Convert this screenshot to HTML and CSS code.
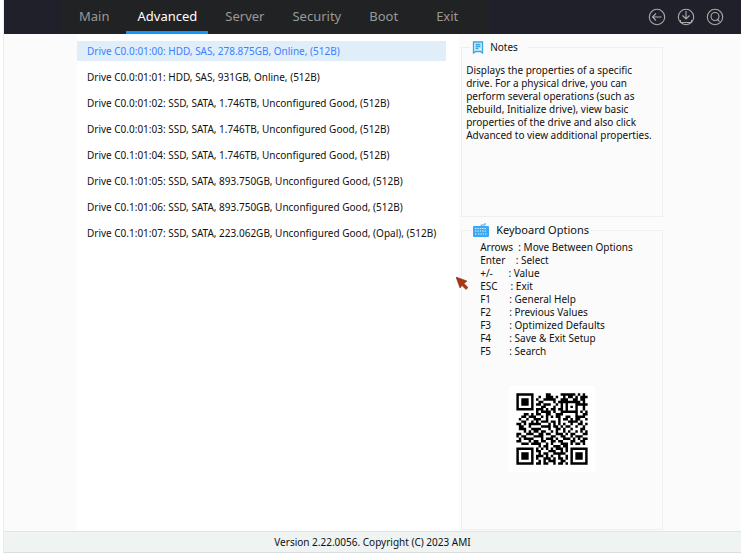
FILE: index.html
```html
<!DOCTYPE html>
<html lang="en">
<head>
    <meta charset="UTF-8">
    <meta name="viewport" content="width=device-width, initial-scale=1.0">
    <title>BIOS Setup</title>
    <link rel="stylesheet" href="styles.css">
</head>
<body>
    <div class="setup">
        <header class="topbar">
            <nav class="tabs">
                <a href="#main">Main</a>
                <a href="#advanced" class="active">Advanced</a>
                <a href="#server">Server</a>
                <a href="#security">Security</a>
                <a href="#boot">Boot</a>
                <a href="#exit" class="last">Exit</a>
            </nav>
            <div class="actions">
                <button type="button" aria-label="Back">
                    <svg viewBox="0 0 18 18"><circle cx="9" cy="9" r="7.7"/><path d="M13.5 9H4.5M8 5.5L4.5 9L8 12.5"/></svg>
                </button>
                <button type="button" aria-label="Save">
                    <svg viewBox="0 0 18 18"><circle cx="9" cy="9" r="7.7"/><path d="M9 3V10.5M5.5 7.5L9 11L12.5 7.5M3.5 12V14.5H14.5V12"/></svg>
                </button>
                <button type="button" aria-label="Search">
                    <svg viewBox="0 0 18 18"><circle cx="9" cy="9" r="7.7"/><circle cx="9" cy="8.5" r="4"/><path d="M11 11L13.5 13.5"/></svg>
                </button>
            </div>
        </header>

        <main class="content">
            <ul class="drives">
                <li><a href="#d0" class="selected">Drive C0.0:01:00: HDD, SAS, 278.875GB, Online, (512B)</a></li>
                <li><a href="#d1">Drive C0.0:01:01: HDD, SAS, 931GB, Online, (512B)</a></li>
                <li><a href="#d2">Drive C0.0:01:02: SSD, SATA, 1.746TB, Unconfigured Good, (512B)</a></li>
                <li><a href="#d3">Drive C0.0:01:03: SSD, SATA, 1.746TB, Unconfigured Good, (512B)</a></li>
                <li><a href="#d4">Drive C0.1:01:04: SSD, SATA, 1.746TB, Unconfigured Good, (512B)</a></li>
                <li><a href="#d5">Drive C0.1:01:05: SSD, SATA, 893.750GB, Unconfigured Good, (512B)</a></li>
                <li><a href="#d6">Drive C0.1:01:06: SSD, SATA, 893.750GB, Unconfigured Good, (512B)</a></li>
                <li><a href="#d7">Drive C0.1:01:07: SSD, SATA, 223.062GB, Unconfigured Good, (Opal), (512B)</a></li>
            </ul>

            <aside class="side">
                <fieldset class="panel notes">
                    <legend>
                        <svg class="note-icon" viewBox="0 0 12 13"><path d="M1.5 1H10.5V12L8.5 10.5H3.5L1.5 12ZM3.5 3.5H8.5M3.5 5.5H8.5M3.5 7.5H6.5"/></svg>
                        Notes
                    </legend>
                    <p>Displays the properties of a specific drive. For a physical drive, you can perform several operations (such as Rebuild, Initialize drive), view basic properties of the drive and also click Advanced to view additional properties.</p>
                </fieldset>

                <fieldset class="panel keyboard">
                    <legend>
                        <svg class="key-icon" viewBox="0 0 16 14">
                            <path class="cord" d="M8 4V2H12V0"/>
                            <rect x="0" y="3" width="16" height="11" rx="1"/>
                            <path class="keys" d="M2 5.5H14M2 8H14M2 11H4M5 11H11M12 11H14"/>
                        </svg>
                        Keyboard Options
                    </legend>
                    <ul class="keylist">
                        <li>Arrows  : Move Between Options</li>
                        <li>Enter    : Select</li>
                        <li>+/-      : Value</li>
                        <li>ESC     : Exit</li>
                        <li>F1       : General Help</li>
                        <li>F2       : Previous Values</li>
                        <li>F3       : Optimized Defaults</li>
                        <li>F4       : Save &amp; Exit Setup</li>
                        <li>F5       : Search</li>
                    </ul>
                    <svg class="qr" id="qr" viewBox="-3 -3 35 35" role="img" aria-label="QR code"></svg>
                </fieldset>

                <svg class="pointer" viewBox="0 0 12 13"><path d="M0 0L11 4L8 6.5L12 10.5L10 12.5L6 8.5L4 11Z"/></svg>
            </aside>
        </main>

        <footer class="footer">Version 2.22.0056. Copyright (C) 2023 AMI</footer>
    </div>
    <script src="qr.js"></script>
</body>
</html>
```

FILE: styles.css
```css
* {
    box-sizing: border-box;
}
body {
    margin: 0;
    padding-left: 3px;
    background-color: #fff;
    color: #111;
    font-family: "Noto Sans", sans-serif;
    font-size: 10px;
    line-height: 13px;
}
a {
    color: inherit;
    text-decoration: none;
}
ul {
    list-style: none;
    margin: 0;
    padding: 0;
}
.setup {
    display: flex;
    flex-direction: column;
    min-height: 100vh;
    border-left: 1px solid #e6eded;
}
.topbar {
    display: flex;
    justify-content: space-between;
    height: 34px;
    padding: 0 17px 0 64px;
    background: linear-gradient(to right, #20202a 58px, #212223 58px, #212223 66%, #20202a 66%);
}
.tabs {
    display: flex;
    gap: 6px;
}
.tabs a {
    padding: 0 11px;
    color: #999;
    font-size: 13px;
    line-height: 32px;
}
.tabs .active {
    color: #fff;
    border-bottom: 3px solid #0f98fb;
}
.tabs .last {
    margin-left: 10px;
}
.actions {
    display: flex;
    align-items: center;
    gap: 11px;
}
.actions button {
    width: 18px;
    height: 18px;
    padding: 0;
    border: none;
    background: none;
}
.actions svg {
    display: block;
    fill: none;
    stroke: #aaa;
    stroke-width: 1.1;
}
.content {
    flex: 1;
    display: grid;
    grid-template-columns: 368fr 203fr;
    column-gap: 15px;
    padding: 0 10.6% 0 9.9%;
    background: linear-gradient(to right, #fbfbfb 9.9%, #fff 9.9%, #fff 61.8%, #fbfbfb 61.8%);
}
.drives {
    padding-top: 7px;
}
.drives li {
    padding-bottom: 6px;
}
.drives a {
    display: block;
    padding: 0 10px;
    line-height: 20px;
    white-space: nowrap;
}
.drives .selected {
    background-color: #e0eefa;
    color: #4080ff;
}
.side {
    position: relative;
    display: flex;
    flex-direction: column;
    gap: 5px;
    padding: 7px 0 1px;
}
.panel {
    min-width: 0;
    margin: 0;
    padding: 0 4px;
    border: 1px solid #efefef;
}
.panel legend {
    display: flex;
    align-items: center;
}
.notes {
    height: 176px;
}
.notes legend {
    gap: 6px;
    margin-left: 4px;
    padding-right: 9px;
}
.notes p {
    margin: 10px 0 0;
}
.keyboard {
    flex: 1;
}
.keyboard legend {
    gap: 7px;
    margin-left: 5px;
    font-size: 11px;
    line-height: 16px;
}
.note-icon {
    width: 12px;
    height: 13px;
    fill: #d7effb;
    stroke: #38a6df;
    stroke-width: 1.3;
}
.key-icon {
    width: 16px;
    height: 14px;
    fill: #3ba8f5;
}
.key-icon .cord {
    fill: none;
    stroke: #3ba8f5;
}
.key-icon .keys {
    stroke: #e2f4ff;
    stroke-width: 1.2;
    stroke-dasharray: 1.4 1;
}
.keylist {
    padding: 3px 0 0 14px;
}
.keylist li {
    white-space: pre;
}
.qr {
    display: block;
    width: 86px;
    height: 86px;
    margin: 28px auto 0 43px;
    background-color: #fff;
    fill: #000;
}
.pointer {
    position: absolute;
    top: 243px;
    left: -5px;
    width: 12px;
    height: 13px;
    fill: #ad3514;
    stroke: #6d2815;
    stroke-width: 0.5;
}
.footer {
    height: 22px;
    border-top: 1px solid #e2e4e4;
    border-bottom: 1px solid #d9dddd;
    background-color: #eff3f1;
    line-height: 21px;
    text-align: center;
}
```

FILE: qr.js
```js
const modules = [
    '11111110000011000011111101010',
    '10000010010011101001011010111',
    '10111010100111110011100110110',
    '10111010011000010111111111010',
    '10111010110111001010100011111',
    '10000010001100010010101010010',
    '11111110111010110110100010010',
    '00000000101111010011111110101',
    '00011010110011001110000010011',
    '00110111001010101100110011110',
    '01001001110010000101101011001',
    '00110010101110110100011110100',
    '11010111110001010101001001101',
    '01100100001111011010110010010',
    '01110011110001001101001000110',
    '00010101101100101001010010101',
    '11001110011011001110101100011',
    '10110001111000110011001011100',
    '01011110001011101001110101011',
    '11000101101100110110001100110',
    '00111011110010100011101011010',
    '00000000010110011101100000000',
    '11111110101010101110101111111',
    '10000010110001110010101000001',
    '10111010010110011111001011101',
    '10111010111010100100101011101',
    '10111010100111010110101011101',
    '10000010010101110011001000001',
    '11111110110110010110101111111'
];

let path = '';
modules.forEach((row, y) => {
    [...row].forEach((bit, x) => {
        if (bit === '1') {
            path += `M${x} ${y}h1v1h-1z`;
        }
    });
});
document.getElementById('qr').innerHTML = `<path d="${path}"/>`;
```
